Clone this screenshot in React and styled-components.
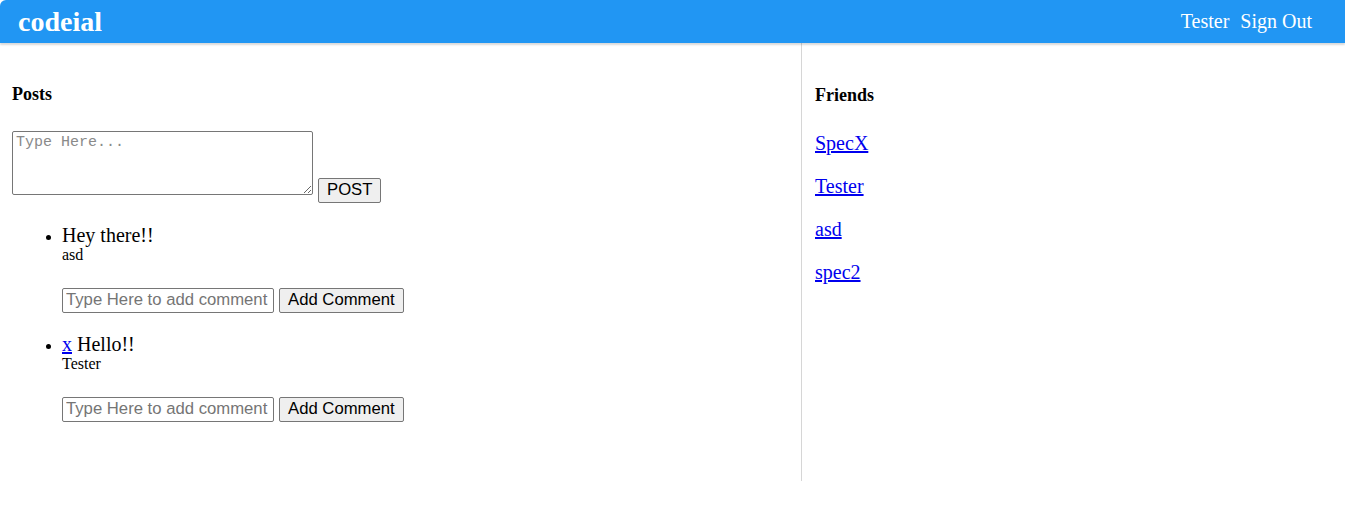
import styled, { createGlobalStyle } from "styled-components";

const GlobalStyle = createGlobalStyle`
  body {
    margin: 0;
    font-family: "Liberation Serif", "Times New Roman", serif;
    background: #fff;
  }
`;

const Nav = styled.nav`
  display: flex;
  align-items: center;
  justify-content: space-between;
  height: 43px;
  padding: 0 33px 0 18px;
  background: #2196f3;
  border-top-left-radius: 6px;
  box-shadow: 0 2px 2px rgba(0, 0, 0, 0.15);
  position: relative;
  z-index: 1;
`;

const Logo = styled.div`
  color: #fff;
  font-size: 28px;
  font-weight: bold;
`;

const NavLinks = styled.div`
  display: flex;
  gap: 11px;
  color: #fff;
  font-size: 20px;
`;

const Main = styled.div`
  display: flex;
  height: 438px;
`;

const PostsSection = styled.div`
  width: 789px;
  padding: 0 0 0 12px;
  border-right: 1px solid #d6d6d6;
`;

const FriendsSection = styled.div`
  flex: 1;
  padding: 1px 0 0 13px;
`;

const Heading = styled.h4`
  font-size: 18px;
  margin: 41px 0 26px;
`;

const PostForm = styled.form`
  display: block;
`;

const TextArea = styled.textarea`
  width: 293px;
  height: 58px;
  margin: 0;
  font-family: "Liberation Mono", monospace;
  font-size: 15px;
  border: 1px solid #767676;
  border-radius: 2px;
  padding: 2px 3px;

  &::placeholder {
    color: #8a8a8a;
  }
`;

const Button = styled.button`
  font-family: "Liberation Sans", Arial, sans-serif;
  font-size: 16.7px;
  padding: 1px 8px;
  background: #efefef;
  border: 1px solid #767676;
  border-radius: 2px;
  color: #000;
  height: 25px;
  margin: 0 0 0 ${(props) => props.$offset || 0}px;
`;

const PostList = styled.ul`
  margin: 21px 0 0;
  padding-left: 50px;
`;

const PostItem = styled.li`
  margin-bottom: 20px;
`;

const PostContent = styled.div`
  font-size: 20px;
  line-height: 22px;
`;

const Author = styled.div`
  font-size: 16px;
  line-height: 18px;
`;

const CommentRow = styled.div`
  display: flex;
  gap: 5px;
  margin-top: 24px;
`;

const CommentInput = styled.input`
  width: 212px;
  height: 25px;
  box-sizing: border-box;
  margin: 0;
  font-family: "Liberation Sans", Arial, sans-serif;
  font-size: 16.7px;
  padding: 1px 3px;
  border: 1px solid #767676;
  border-radius: 2px;

  &::placeholder {
    color: #757575;
  }
`;

const Link = styled.a`
  color: #0000ee;
  text-decoration: underline;
`;

const FriendLink = styled.p`
  font-size: 20px;
  margin: 0 0 20px;
`;

const posts = [
  { content: "Hey there!!", author: "asd", deletable: false },
  { content: "Hello!!", author: "Tester", deletable: true },
];

const friends = ["SpecX", "Tester", "asd", "spec2"];

export default function App() {
  return (
    <>
      <GlobalStyle />
      <Nav>
        <Logo>codeial</Logo>
        <NavLinks>
          <span>Tester</span>
          <span>Sign Out</span>
        </NavLinks>
      </Nav>
      <Main>
        <PostsSection>
          <Heading>Posts</Heading>
          <PostForm onSubmit={(e) => e.preventDefault()}>
            <TextArea placeholder="Type Here..." />{" "}
            <Button type="submit" $offset={1}>
              POST
            </Button>
          </PostForm>
          <PostList>
            {posts.map((post) => (
              <PostItem key={post.content}>
                <PostContent>
                  {post.deletable && (
                    <>
                      <Link href="#">x</Link>{" "}
                    </>
                  )}
                  {post.content}
                </PostContent>
                <Author>{post.author}</Author>
                <CommentRow>
                  <CommentInput placeholder="Type Here to add comment" />
                  <Button>Add Comment</Button>
                </CommentRow>
              </PostItem>
            ))}
          </PostList>
        </PostsSection>
        <FriendsSection>
          <Heading>Friends</Heading>
          {friends.map((name) => (
            <FriendLink key={name}>
              <Link href="#">{name}</Link>
            </FriendLink>
          ))}
        </FriendsSection>
      </Main>
    </>
  );
}
